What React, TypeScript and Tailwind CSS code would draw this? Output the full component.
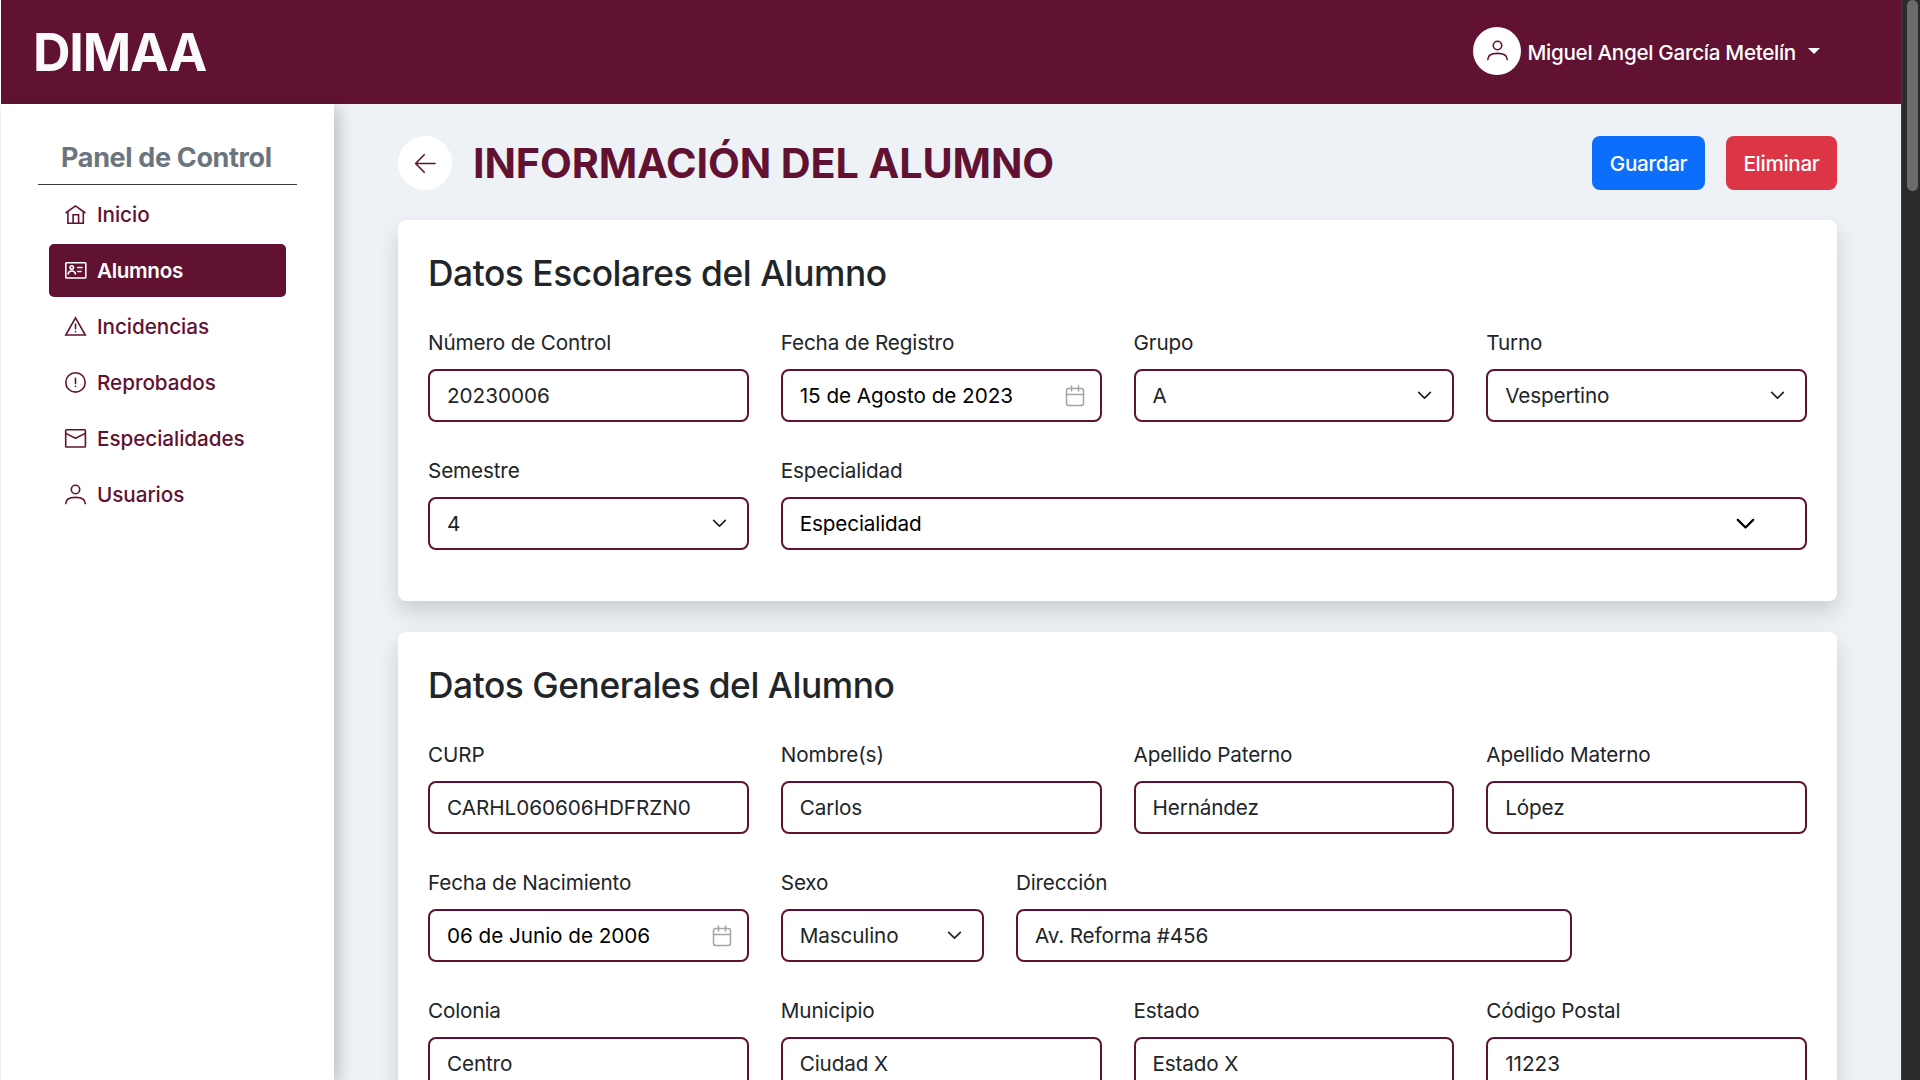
import React from "react";
import type { ReactNode } from "react";

function Icon({ children }: { children: ReactNode }) {
  return (
    <svg viewBox="0 0 21 21" className="size-[21px] shrink-0 overflow-visible" fill="none" stroke="currentColor" strokeWidth="1.6" strokeLinecap="round" strokeLinejoin="round">
      {children}
    </svg>
  );
}

const HomeIcon = () => (
  <Icon>
    <path d="M.6 9 10.5 1.9 20.4 9M2.9 7.6v11.6h15.4V7.6M8.1 19v-8.3h5.5V19" strokeLinecap="butt" strokeLinejoin="miter" />
  </Icon>
);
const CardIcon = () => (
  <Icon>
    <rect x=".8" y="2.8" width="20" height="15.2" rx=".8" />
    <circle cx="6.8" cy="7.4" r="1.7" />
    <path d="M3.2 14c.2-2.2 1.5-3 3.6-3s3.4.8 3.6 3M12.7 7.5H17M12.700 11.5h3.3" />
  </Icon>
);
const WarningIcon = () => (
  <Icon>
    <path d="M10.5 1.9 20.3 19H.8L10.5 1.9Z" strokeLinejoin="miter" />
    <path d="M10.5 8v4.7M10.5 15.5v.2" />
  </Icon>
);
const AlertIcon = () => (
  <Icon>
    <circle cx="10.5" cy="10.4" r="9.7" />
    <path d="M10.5 6.4v5M10.5 14.2v.2" />
  </Icon>
);
const MailIcon = () => (
  <Icon>
    <rect x=".7" y="1.8" width="19.7" height="17.2" rx=".8" />
    <path d="m.8 5.4 9.7 4.9 9.8-4.9" />
  </Icon>
);
const UserIcon = () => (
  <Icon>
    <circle cx="10.5" cy="5.5" r="4.2" />
    <path d="M.8 19.600c0-4.300 3.600-6.200 9.700-6.200s9.700 1.900 9.700 6.200" />
  </Icon>
);
const ArrowIcon = () => (
  <Icon>
    <path d="M20 10.5H.8M9.200 1.700.6 10.500l8.600 8.800" />
  </Icon>
);
const CalendarIcon = () => (
  <svg viewBox="0 0 20 22" className="h-[22px] w-5 shrink-0 text-[#a3a3a3]" fill="none" stroke="currentColor" strokeWidth="1.5" strokeLinecap="round">
    <rect x="1.5" y="3.500" width="17" height="17" rx="2.2" />
    <path d="M1.5 9.500h17M6.500 1v5M13.500 1v5" />
  </svg>
);
const ChevronIcon = ({ large }: { large?: boolean }) => (
  <svg viewBox="0 0 16 10" className={large ? "h-3 w-[19px] shrink-0" : "h-[9px] w-[15px] shrink-0"} fill="none" stroke="currentColor" strokeWidth="1.9" strokeLinecap="round" strokeLinejoin="round">
    <path d="m1.500 1.500 6.500 6.500 6.500-6.500" />
  </svg>
);

const menu = [
  { label: "Inicio", icon: <HomeIcon /> },
  { label: "Alumnos", icon: <CardIcon />, active: true },
  { label: "Incidencias", icon: <WarningIcon /> },
  { label: "Reprobados", icon: <AlertIcon /> },
  { label: "Especialidades", icon: <MailIcon /> },
  { label: "Usuarios", icon: <UserIcon /> },
];

type FieldProps = {
  label: string;
  value: string;
  kind?: "text" | "date" | "select" | "picker";
  span?: string;
};

function Field({ label, value, kind = "text", span = "col-span-3" }: FieldProps) {
  const dark = kind === "date" || kind === "picker";
  const numeric = /\d{4}/.test(value);
  return (
    <div className={span}>
      <div className="h-8 leading-8">{label}</div>
      <div className={`mt-2.5 flex h-[53px] items-center justify-between rounded-[8px] border-2 border-[#611232] pl-[17px] ${dark ? "text-black" : "text-[#212529]"}`}>
        <span className={numeric ? "pt-px tracking-[-0.04px]" : "pt-px"}>{value}</span>
        {kind === "date" && <span className="mr-[15px]"><CalendarIcon /></span>}
        {kind === "select" && <span className="mr-5"><ChevronIcon /></span>}
        {kind === "picker" && <span className="mr-[50px]"><ChevronIcon large /></span>}
      </div>
    </div>
  );
}

function Card({ title, children }: { title: string; children: ReactNode }) {
  return (
    <section className="rounded-[8px] bg-white px-[30px] pt-[31px] pb-[51px] shadow-[0_11px_21px_rgba(0,0,0,0.15)]">
      <h2 className="h-11 text-[35.3px] leading-[45px] font-medium tracking-[-0.43px]">{title}</h2>
      <div className="mt-8 grid grid-cols-12 gap-x-8 gap-y-[33px]">{children}</div>
    </section>
  );
}

export default function App() {
  return (
    <div className="flex h-[1080px] w-[1920px] overflow-hidden bg-white pl-px font-['Inter',sans-serif] text-[20.7px] tracking-[-0.14px] text-[#212529]">
      <div className="flex h-full w-[1900px] flex-col bg-[#eef1f6]">
        <header className="flex h-[104px] shrink-0 items-center justify-between bg-[#611232] pr-[81px] pl-8 text-white">
          <div className="pt-0.5 text-[52px] leading-none font-bold tracking-[-1.2px] text-[#fafafa]">DIMAA</div>
          <div className="flex items-center">
            <div className="-mt-[3px] flex size-12 items-center justify-center rounded-full bg-white text-[#611232]">
              <UserIcon />
            </div>
            <span className="ml-1.5 pt-px font-medium tracking-[-0.32px]">Miguel Angel García Metelín</span>
            <span className="-mt-0.5 ml-3 border-x-[6px] border-t-[6px] border-x-transparent border-t-white" />
          </div>
        </header>

        <div className="flex min-h-0 flex-1">
          <aside className="z-10 w-[333px] shrink-0 bg-white px-[37px] pt-[34px] shadow-[4px_4px_16px_rgba(0,0,0,0.23)]">
            <h3 className="h-[47px] border-b border-[#343a40] pl-[23px] text-[27px] leading-10 font-bold tracking-[-0.35px] text-[#6c757d]">Panel de Control</h3>
            <nav className="mx-[11px] mt-[3px] flex flex-col gap-[3px]">
              {menu.map((m) => (
                <div
                  key={m.label}
                  className={`flex h-[53px] items-center gap-[11px] rounded-[5px] pl-4 ${
                    m.active ? "bg-[#611232] font-semibold tracking-[-0.35px] text-white" : "font-medium tracking-[-0.06px] text-[#611232]"
                  }`}
                >
                  {m.icon}
                  <span>{m.label}</span>
                </div>
              ))}
            </nav>
          </aside>

          <main className="min-w-0 flex-1 overflow-hidden pt-8 pr-16 pl-16">
            <div className="flex items-center">
              <div className="flex size-[54px] items-center justify-center rounded-full bg-white text-[#611232]">
                <ArrowIcon />
              </div>
              <h1 className="ml-[21px] text-[41.3px] leading-[53px] font-bold tracking-[-0.1px] text-[#611232]">INFORMACIÓN DEL ALUMNO</h1>
              <div className="ml-auto flex gap-[21px] font-medium tracking-[-0.33px] text-white">
                <div className="flex h-[54px] w-[113px] items-center justify-center rounded-[8px] bg-[#0d6efd] pt-px">Guardar</div>
                <div className="flex h-[54px] w-[111px] items-center justify-center rounded-[8px] bg-[#dc3545] pt-px">Eliminar</div>
              </div>
            </div>

            <div className="mt-[30px] flex flex-col gap-[31px]">
              <Card title="Datos Escolares del Alumno">
                <Field label="Número de Control" value="20230006" />
                <Field label="Fecha de Registro" value="15 de Agosto de 2023" kind="date" />
                <Field label="Grupo" value="A" kind="select" />
                <Field label="Turno" value="Vespertino" kind="select" />
                <Field label="Semestre" value="4" kind="select" />
                <Field label="Especialidad" value="Especialidad" kind="picker" span="col-span-9" />
              </Card>
              <Card title="Datos Generales del Alumno">
                <Field label="CURP" value="CARHL060606HDFRZN0" />
                <Field label="Nombre(s)" value="Carlos" />
                <Field label="Apellido Paterno" value="Hernández" />
                <Field label="Apellido Materno" value="López" />
                <Field label="Fecha de Nacimiento" value="06 de Junio de 2006" kind="date" />
                <Field label="Sexo" value="Masculino" kind="select" span="col-span-2" />
                <Field label="Dirección" value="Av. Reforma #456" span="col-span-5" />
                <div className="col-span-2" />
                <Field label="Colonia" value="Centro" />
                <Field label="Municipio" value="Ciudad X" />
                <Field label="Estado" value="Estado X" />
                <Field label="Código Postal" value="11223" />
              </Card>
            </div>
          </main>
        </div>
      </div>
      <div className="flex h-full w-[19px] shrink-0 justify-center border-l border-[#3c3c3c] bg-[#2b2b2b] pl-0.5">
        <div className="h-[191px] w-[11px] rounded-full bg-[#6b6b6b]" />
      </div>
    </div>
  );
}
